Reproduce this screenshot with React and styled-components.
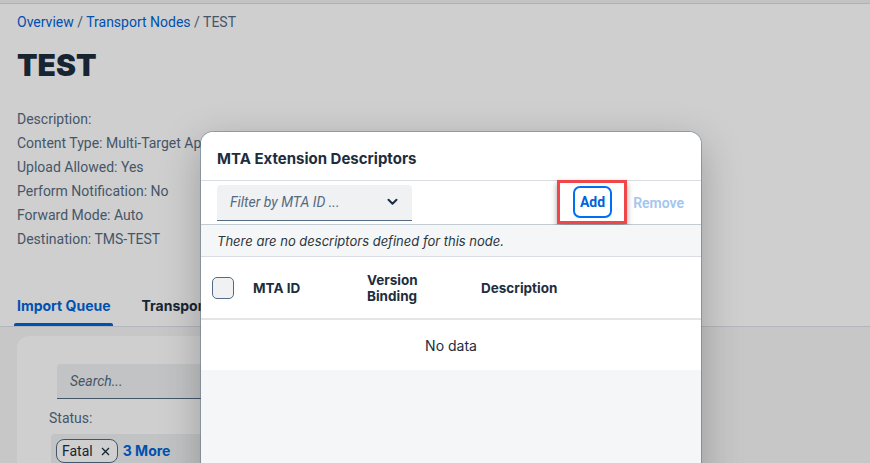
import React from "react";
import styled, { createGlobalStyle } from "styled-components";

const GlobalStyle = createGlobalStyle`
  html, body {
    margin: 0;
    padding: 0;
  }
  body {
    font-family: Roboto, "Liberation Sans", sans-serif;
    color: #1d2d3e;
    overflow: hidden;
  }
  #root {
    height: 100vh;
  }
`;

const wide = `Inter, Roboto, "Liberation Sans", sans-serif`;

const Page = styled.div`
  position: relative;
  height: 463px;
  overflow: hidden;
  background: #fafafa;
  display: flex;
  flex-direction: column;
`;

const ShellEdge = styled.div`
  height: 3px;
  background: #f0f0f0;
  border-bottom: 1px solid #dadada;
  flex-shrink: 0;
`;

const Header = styled.header`
  background: #ffffff;
  padding: 10px 17px 0;
  border-bottom: 1px solid #dde1e5;
`;

const Breadcrumb = styled.nav`
  font-size: 14px;
  line-height: 17px;
  color: #556b82;

  a {
    color: #0064d9;
    text-decoration: none;
  }
`;

const Title = styled.h1`
  margin: 16px 0 0;
  font-family: ${wide};
  font-size: 30px;
  line-height: 36px;
  font-weight: 900;
  color: #1d2d3e;
`;

const Fields = styled.div`
  margin-top: 24px;
  display: flex;
  flex-direction: column;
`;

const Field = styled.div`
  font-size: 14px;
  line-height: 24px;
  color: #556b82;
  white-space: nowrap;
`;

const Tabs = styled.div`
  margin-top: 46px;
  display: flex;
  gap: 31px;
`;

const TabItem = styled.div`
  position: relative;
  font-family: ${wide};
  font-size: 14px;
  font-weight: 700;
  padding-bottom: 12px;
  color: ${(p) => (p.$active ? "#0064d9" : "#1d2d3e")};

  &::after {
    content: "";
    display: ${(p) => (p.$active ? "block" : "none")};
    position: absolute;
    left: -3px;
    right: -2px;
    bottom: 0;
    height: 3px;
    border-radius: 2px 2px 0 0;
    background: #0064d9;
  }
`;

const Content = styled.main`
  flex: 1;
  padding: 9px 17px 0;
  background: #f5f6f7;
`;

const Card = styled.section`
  width: 420px;
  background: #ffffff;
  border-radius: 12px 12px 0 0;
  height: 200px;
  padding: 28px 0 0 32px;
`;

const SearchField = styled.div`
  margin-left: 8px;
  width: 420px;
  height: 35px;
  box-sizing: border-box;
  background: #eff1f2;
  border-radius: 4px 4px 0 0;
  border-bottom: 1px solid #556b82;
  display: flex;
  align-items: center;
  padding-left: 13px;
  font-size: 14px;
  font-style: italic;
  color: #556b82;
`;

const Label = styled.div`
  margin-top: 11px;
  font-size: 14px;
  color: #556b82;
`;

const MultiInput = styled.div`
  margin-top: 8px;
  margin-left: 2px;
  width: 420px;
  height: 36px;
  background: #eff1f2;
  border-radius: 4px 4px 0 0;
  display: flex;
  align-items: flex-start;
  padding: 5px 5px 0;
  gap: 5px;
  box-sizing: border-box;
`;

const Token = styled.span`
  display: inline-flex;
  align-items: center;
  gap: 8px;
  height: 24px;
  box-sizing: border-box;
  padding: 0 7px 0 5px;
  border: 1px solid #556b82;
  border-radius: 8px;
  background: #ffffff;
  font-size: 14px;
  color: #1d2d3e;
`;

const MoreLink = styled.span`
  font-family: ${wide};
  font-size: 14px;
  font-weight: 700;
  color: #0064d9;
  line-height: 24px;
`;

const Overlay = styled.div`
  position: absolute;
  inset: 0;
  background: rgba(0, 0, 0, 0.19);
`;

const Dialog = styled.div`
  position: absolute;
  left: 201px;
  top: 132px;
  width: 500px;
  height: 360px;
  background: #f5f6f7;
  border-radius: 12px 12px 0 0;
  box-shadow: 0 0 0 1px rgba(85, 107, 130, 0.45),
    0 12px 40px rgba(0, 0, 0, 0.25);
  overflow: hidden;
  display: flex;
  flex-direction: column;
`;

const DialogHeader = styled.div`
  height: 49px;
  flex-shrink: 0;
  background: #ffffff;
  border-bottom: 1px solid #d9dde1;
  display: flex;
  align-items: center;
  padding: 4px 16px 0;
  box-sizing: border-box;
  font-family: ${wide};
  font-size: 15px;
  font-weight: 700;
  color: #1d2d3e;
`;

const Toolbar = styled.div`
  height: 44px;
  flex-shrink: 0;
  background: #ffffff;
  border-bottom: 1px solid #c3cbd3;
  display: flex;
  align-items: center;
  padding: 0 17px 0 16px;
  box-sizing: border-box;
`;

const Select = styled.div`
  width: 195px;
  height: 36px;
  box-sizing: border-box;
  background: #eff1f2;
  border-radius: 4px 4px 0 0;
  border-bottom: 1px solid #556b82;
  display: flex;
  align-items: center;
  justify-content: space-between;
  padding: 0 14px 0 13px;
  font-size: 14px;
  font-style: italic;
  color: #556b82;
`;

const Spacer = styled.div`
  flex: 1;
`;

const Highlight = styled.div`
  box-sizing: border-box;
  height: 44px;
  margin-top: -1px;
  padding: 0 12px 0 13px;
  display: flex;
  align-items: center;
  border: 3px solid #f0464a;
  box-shadow: 0 3px 6px rgba(0, 0, 0, 0.35);
`;

const Button = styled.button`
  font-family: inherit;
  font-size: 14px;
  font-weight: 700;
  height: 32px;
  padding: 0 ${(p) => (p.$outlined ? "5px" : "0")};
  border-radius: 7px;
  background: #ffffff;
  border: ${(p) => (p.$outlined ? "2px solid #0070f2" : "none")};
  color: ${(p) => (p.disabled ? "#a3c5ef" : "#0064d9")};
  cursor: pointer;
`;

const RemoveButton = styled(Button)`
  margin-left: 6px;
  font-weight: 600;
  background: transparent;
`;

const InfoStrip = styled.div`
  height: 32px;
  flex-shrink: 0;
  box-sizing: border-box;
  background: #f5f6f7;
  border-bottom: 1px solid #d9dde1;
  display: flex;
  align-items: center;
  padding-left: 16px;
  font-family: ${wide};
  font-size: 13px;
  font-style: italic;
  color: #2c3640;
`;

const TableHead = styled.div`
  height: 63px;
  flex-shrink: 0;
  box-sizing: border-box;
  background: #ffffff;
  border-bottom: 2px solid #e5e5e5;
  display: grid;
  grid-template-columns: 44px 114px 114px 1fr;
  align-items: center;
`;

const CheckCell = styled.div`
  display: flex;
  padding-left: 11px;
`;

const Checkbox = styled.span`
  width: 22px;
  height: 22px;
  box-sizing: border-box;
  border: 1px solid #556b82;
  border-radius: 5px;
  background: #eff1f2;
`;

const HeadCell = styled.div`
  padding-left: 8px;
  font-family: ${wide};
  font-size: 13.5px;
  font-weight: 700;
  line-height: 16px;
  color: #1d2d3e;
`;

const NoData = styled.div`
  height: 50px;
  flex-shrink: 0;
  background: #ffffff;
  display: flex;
  align-items: center;
  justify-content: center;
  font-family: ${wide};
  font-size: 14px;
  color: #1d2d3e;
`;

const Chevron = () => (
  <svg width="11" height="8" viewBox="0 0 11 8">
    <path
      d="M1.5 1.8 L5.5 5.8 L9.5 1.8"
      fill="none"
      stroke="#1d2d3e"
      strokeWidth="2"
      strokeLinecap="round"
      strokeLinejoin="round"
    />
  </svg>
);

const CloseMark = () => (
  <svg width="9" height="9" viewBox="0 0 9 9">
    <path d="M1 1 L8 8 M8 1 L1 8" stroke="#1d2d3e" strokeWidth="1.3" />
  </svg>
);

const fields = [
  "Description:",
  "Content Type: Multi-Target Application (MTA)",
  "Upload Allowed: Yes",
  "Perform Notification: No",
  "Forward Mode: Auto",
  "Destination: TMS-TEST",
];

export default function App() {
  return (
    <>
      <GlobalStyle />
      <Page>
        <ShellEdge />
        <Header>
          <Breadcrumb>
            <a href="#overview">Overview</a> / <a href="#nodes">Transport Nodes</a> / TEST
          </Breadcrumb>
          <Title>TEST</Title>
          <Fields>
            {fields.map((f) => (
              <Field key={f}>{f}</Field>
            ))}
          </Fields>
          <Tabs>
            <TabItem $active>Import Queue</TabItem>
            <TabItem>Transport Action Log</TabItem>
          </Tabs>
        </Header>
        <Content>
          <Card>
            <SearchField>Search...</SearchField>
            <Label>Status:</Label>
            <MultiInput>
              <Token>
                Fatal <CloseMark />
              </Token>
              <MoreLink>3 More</MoreLink>
            </MultiInput>
          </Card>
        </Content>

        <Overlay />

        <Dialog role="dialog">
          <DialogHeader>MTA Extension Descriptors</DialogHeader>
          <Toolbar>
            <Select>
              Filter by MTA ID ...
              <Chevron />
            </Select>
            <Spacer />
            <Highlight>
              <Button $outlined>Add</Button>
            </Highlight>
            <RemoveButton disabled>Remove</RemoveButton>
          </Toolbar>
          <InfoStrip>There are no descriptors defined for this node.</InfoStrip>
          <TableHead>
            <CheckCell>
              <Checkbox />
            </CheckCell>
            <HeadCell>MTA ID</HeadCell>
            <HeadCell>
              Version
              <br />
              Binding
            </HeadCell>
            <HeadCell>Description</HeadCell>
          </TableHead>
          <NoData>No data</NoData>
        </Dialog>
      </Page>
    </>
  );
}
